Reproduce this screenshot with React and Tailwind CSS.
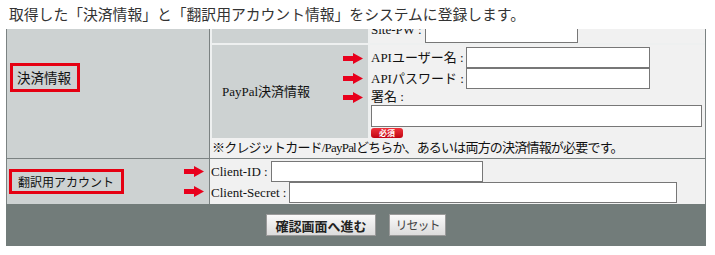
import React from 'react';

const serif = "font-['Liberation_Serif','Noto_Sans_CJK_JP',serif]";
const gothic = "font-['Noto_Sans_CJK_JP','Liberation_Sans',sans-serif]";

const Arrow = () => (
  <svg width="20" height="11" viewBox="0 0 20 11" className="block">
    <polygon points="0,3 10,3 10,0 20,5.5 10,11 10,8 0,8" fill="#e8001c" />
  </svg>
);

const Field = ({ className = '' }) => (
  <input
    type="text"
    className={`h-[21px] border border-[#777] bg-white outline-none ${className}`}
  />
);

const App = () => {
  return (
    <div className={`w-[715px] h-[255px] bg-white overflow-hidden ${serif} text-[13px] text-[#111]`}>
      <p className={`h-[29px] pl-[9px] pt-[4px] text-[14.8px] leading-[20px] text-[#333] whitespace-nowrap ${gothic}`}>
        取得した「決済情報」と「翻訳用アカウント情報」をシステムに登録します。
      </p>

      <div className="ml-[6px] w-[700px]">
        {/* 決済情報 */}
        <div className="flex h-[130px] border-x border-b border-[#7b8282]">
          <div className="w-[203px] shrink-0 bg-[#cdd2d2] border-r border-[#7b8282] pt-[34px] pl-[3px]">
            <div className={`w-[70px] h-[29px] border-[3px] border-[#e50012] flex items-center pl-[4px] text-[13.5px] whitespace-nowrap ${gothic}`}>
              決済情報
            </div>
          </div>
          <div className="flex-1 bg-[#f1f1f1] flex flex-col">
            <div className="bg-[#eef0f0] pl-[2px] grid grid-cols-[156px_1fr] gap-x-[2px] gap-y-[2px]">
              {/* Site-PW row, top cut off */}
              <div className="h-[14px] bg-[#cdd2d2]" />
              <div className="h-[14px] bg-[#f1f1f1] flex items-end overflow-hidden pl-[1px]">
                <div className="flex items-end">
                  <span className="mb-[6px] leading-[15px]">Site-PW :</span>
                  <Field className="ml-[3px] w-[153px]" />
                </div>
              </div>

              {/* PayPal row */}
              <div className="h-[93px] bg-[#cdd2d2] flex">
                <span className="self-center pl-[10px]">PayPal決済情報</span>
                <div className="ml-auto pr-[5px] flex flex-col">
                  <div className="mt-[8px]"><Arrow /></div>
                  <div className="mt-[9px]"><Arrow /></div>
                  <div className="mt-[8px]"><Arrow /></div>
                </div>
              </div>
              <div className="h-[93px] bg-[#f1f1f1] pl-[1px] pt-[2px] flex flex-col">
                <div className="flex items-center h-[21px]">
                  <span>APIユーザー名 :</span>
                  <Field className="ml-[2px] w-[184px]" />
                </div>
                <div className="flex items-center h-[21px]">
                  <span>APIパスワード :</span>
                  <Field className="ml-[2px] w-[184px]" />
                </div>
                <div className="h-[16px] leading-[16px]">署名 :</div>
                <Field className="w-[331px] h-[22px]" />
                <span className={`mt-[1px] w-[32px] h-[10px] rounded-[3px] bg-gradient-to-b from-[#f0303a] to-[#c00010] text-white text-[8px] font-bold leading-[10px] text-center ${gothic}`}>
                  必須
                </span>
              </div>
            </div>
            <div className="pl-[2px] pt-[1px] leading-[18px] tracking-[-0.8px] whitespace-nowrap">
              ※クレジットカード/PayPalどちらか、あるいは両方の決済情報が必要です。
            </div>
          </div>
        </div>

        {/* 翻訳用アカウント */}
        <div className="flex h-[45px] border-x border-[#7b8282]">
          <div className="w-[203px] shrink-0 bg-[#cdd2d2] border-r border-[#7b8282] flex items-center pl-[2px] pr-[5px]">
            <div className={`w-[115px] h-[25px] border-[3px] border-[#e50012] flex items-center pl-[6px] text-[12px] whitespace-nowrap ${gothic}`}>
              翻訳用アカウント
            </div>
            <div className="ml-auto flex flex-col gap-[9px]">
              <Arrow />
              <Arrow />
            </div>
          </div>
          <div className="flex-1 bg-[#f1f1f1] pl-[1px] pt-[2px]">
            <div className="flex items-center h-[21px]">
              <span>Client-ID :</span>
              <Field className="ml-[3px] w-[212px]" />
            </div>
            <div className="flex items-center h-[21px]">
              <span>Client-Secret :</span>
              <Field className="ml-[3px] w-[388px]" />
            </div>
          </div>
        </div>

        {/* buttons */}
        <div className="h-[42px] bg-[#727c7a] flex justify-center items-center gap-[13px]">
          <button
            type="submit"
            className={`w-[110px] h-[22px] border border-[#9a9a9a] bg-gradient-to-b from-[#fafafa] to-[#dcdcdc] text-[13px] font-bold text-[#222] leading-none ${gothic}`}
          >
            確認画面へ進む
          </button>
          <button
            type="reset"
            className={`w-[57px] h-[22px] border border-[#9a9a9a] bg-gradient-to-b from-[#fafafa] to-[#dcdcdc] text-[12px] text-[#444] leading-none tracking-[-1px] ${gothic}`}
          >
            リセット
          </button>
        </div>
      </div>
    </div>
  );
};

export default App;
